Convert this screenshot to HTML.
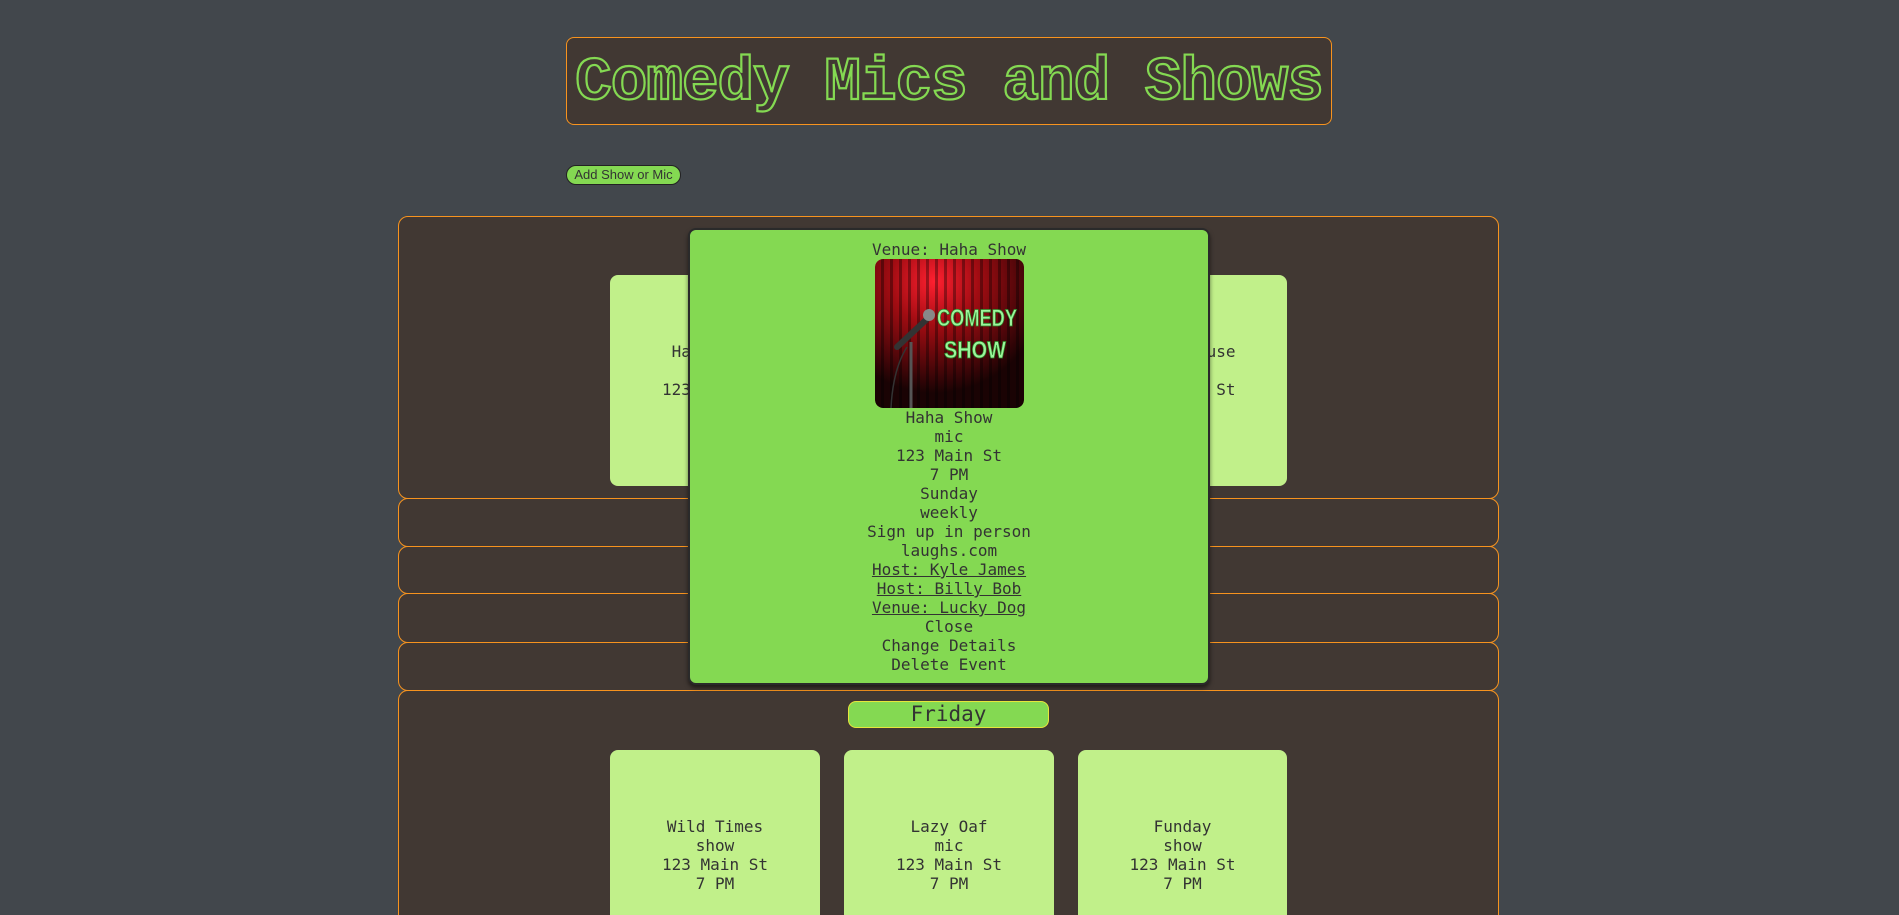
<!DOCTYPE html>
<html style="width:1899px;height:915px;overflow:hidden;"><head><meta charset="utf-8">
<style>
html,body{margin:0;padding:0;}
body{width:1899px;height:915px;background:#42474c;overflow:hidden;position:relative;font-family:"DejaVu Sans Mono","Liberation Mono",monospace;}
.abs{position:absolute;box-sizing:border-box;}
.hdr{left:566px;top:37px;width:766px;height:88px;background:#413833;border:1px solid #f7931e;border-radius:8px;}
.hdr span{position:absolute;left:0;right:0;top:11px;text-align:center;font-family:"Liberation Mono",monospace;font-weight:bold;font-size:61px;color:transparent;-webkit-text-stroke:2.2px #84d952;letter-spacing:-1px;}
.btn{left:566px;top:165px;width:115px;height:20px;background:#84d952;border:1px solid #222;border-radius:10px;font-family:"Liberation Sans",sans-serif;font-size:13px;color:#333;text-align:center;line-height:18px;}
.sec{left:398px;width:1101px;background:#413833;border:1.5px solid #f7931e;border-radius:10px;}
.card{background:#c1f08a;border-radius:8px;text-align:center;color:#333;font-size:16px;line-height:19px;}
.pill{left:848px;top:701px;width:201px;height:27px;background:#84d952;border:1.5px solid #e6e63c;border-radius:8px;text-align:center;font-size:21px;line-height:25px;color:#333;}
.modal{left:688px;top:228px;width:522px;height:457px;background:#84d952;border:2px solid #2a2a2a;border-radius:8px;box-shadow:0 3px 4px rgba(0,0,0,.5);text-align:center;color:#333;font-size:16px;line-height:19px;}
</style></head><body>
<div class="abs hdr"><span>Comedy Mics and Shows</span></div>
<div class="abs btn">Add Show or Mic</div>

<div class="abs sec" style="top:216px;height:283px;"></div>
<div class="abs card" style="left:610px;top:275px;width:210px;height:211px;padding-top:67px;">Haha Show<br>mic<br>123 Main St</div>
<div class="abs card" style="left:1078px;top:275px;width:209px;height:211px;padding-top:67px;">Lucky House<br>mic<br>123 Main St</div>
<div class="abs sec" style="top:498px;height:49px;"></div>
<div class="abs sec" style="top:546px;height:48px;"></div>
<div class="abs sec" style="top:593px;height:50px;"></div>
<div class="abs sec" style="top:642px;height:49px;"></div>
<div class="abs sec" style="top:690px;height:225px;border-bottom:none;border-bottom-left-radius:0;border-bottom-right-radius:0;"></div>
<div class="abs pill">Friday</div>
<div class="abs card" style="left:610px;top:750px;width:210px;height:165px;padding-top:67px;border-bottom-left-radius:0;border-bottom-right-radius:0;">Wild Times<br>show<br>123 Main St<br>7 PM</div>
<div class="abs card" style="left:844px;top:750px;width:210px;height:165px;padding-top:67px;border-bottom-left-radius:0;border-bottom-right-radius:0;">Lazy Oaf<br>mic<br>123 Main St<br>7 PM</div>
<div class="abs card" style="left:1078px;top:750px;width:209px;height:165px;padding-top:67px;border-bottom-left-radius:0;border-bottom-right-radius:0;">Funday<br>show<br>123 Main St<br>7 PM</div>

<div class="abs modal">
<div style="padding-top:10px;">Venue: Haha Show</div>
<svg width="149" height="149" viewBox="0 0 149 149" style="display:block;margin:0 auto 0;border-radius:8px;">
<defs>
<radialGradient id="g" cx="0.4" cy="0.15" r="0.75"><stop offset="0" stop-color="#ff2030"/><stop offset="0.4" stop-color="#a00c12"/><stop offset="1" stop-color="#1a0304"/></radialGradient>
<pattern id="p" width="9" height="149" patternUnits="userSpaceOnUse"><rect x="6" width="3" height="149" fill="rgba(0,0,0,0.35)"/></pattern>
</defs>
<rect width="149" height="149" rx="8" fill="url(#g)"/>
<rect width="149" height="149" rx="8" fill="url(#p)"/>
<line x1="36" y1="83" x2="36" y2="149" stroke="#555" stroke-width="3"/>
<path d="M32 88 Q18 110 16 149" stroke="#333" stroke-width="1.5" fill="none"/>
<line x1="22" y1="88" x2="52" y2="60" stroke="#333" stroke-width="6" stroke-linecap="round"/>
<circle cx="54" cy="56" r="6" fill="#888"/>
<text x="102" y="67" text-anchor="middle" font-family="Liberation Sans,sans-serif" font-weight="bold" font-size="24" fill="#9cf59c" stroke="#2a8a2a" stroke-width="0.8" textLength="80" lengthAdjust="spacingAndGlyphs">COMEDY</text>
<text x="100" y="99" text-anchor="middle" font-family="Liberation Sans,sans-serif" font-weight="bold" font-size="24" fill="#9cf59c" stroke="#2a8a2a" stroke-width="0.8" textLength="62" lengthAdjust="spacingAndGlyphs">SHOW</text>
</svg>
<div>Haha Show<br>mic<br>123 Main St<br>7 PM<br>Sunday<br>weekly<br>Sign up in person<br>laughs.com<br><u>Host: Kyle James</u><br><u>Host: Billy Bob</u><br><u>Venue: Lucky Dog</u><br>Close<br>Change Details<br>Delete Event</div>
</div>
</body></html>
